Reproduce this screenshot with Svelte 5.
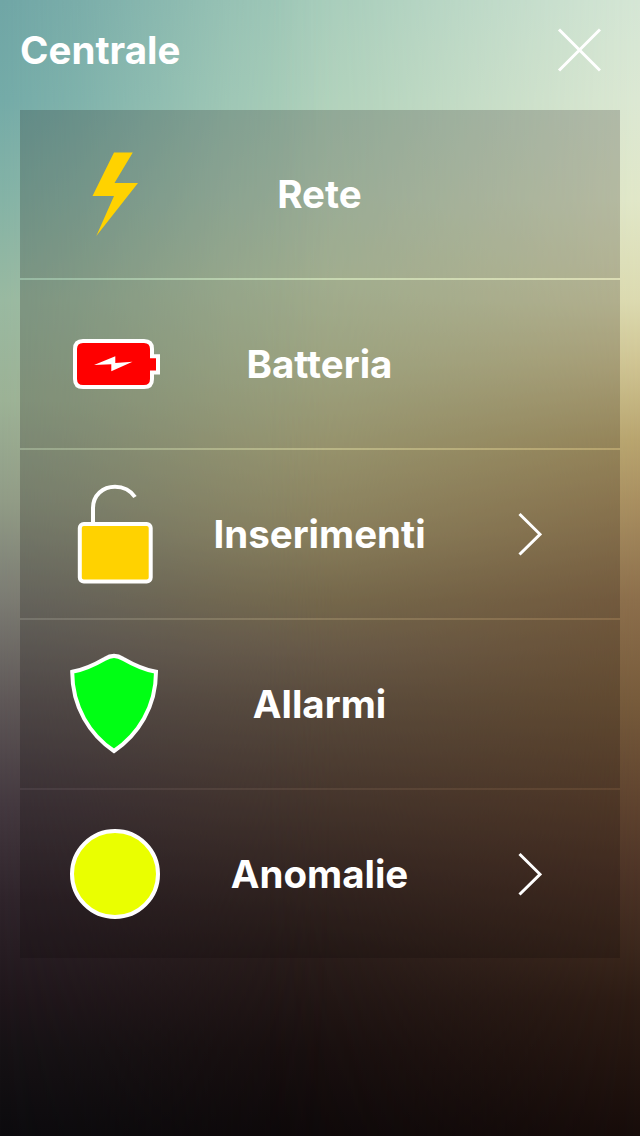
<script>
  const rows = [
    { icon: "bolt", label: "Rete", link: false },
    { icon: "battery", label: "Batteria", link: false },
    { icon: "lock", label: "Inserimenti", link: true },
    { icon: "shield", label: "Allarmi", link: false },
    { icon: "status", label: "Anomalie", link: true },
  ];
</script>

<main class="screen">
  <header>
    <h1>Centrale</h1>
    <button class="close" aria-label="Chiudi">
      <svg width="44" height="44" viewBox="0 0 44 44">
        <path d="M2 1.5 L43 42.5 M43 1.5 L2 42.5" />
      </svg>
    </button>
  </header>

  <ul class="menu">
    {#each rows as row}
      <li class="row">
        <span class="icon">
          <svg width="100" height="110" viewBox="0 0 100 110">
            {#if row.icon === "bolt"}
              <path d="M49 13.5 L67.8 13.5 L49.5 44 L73 44 L31.3 97 L49 57 L27.5 57 Z" fill="#ffd200" />
            {:else if row.icon === "battery"}
              <path
                class="outline"
                d="M18 32 H79 Q87 32 87 40 V47.3 H93 V63.5 H87 V70 Q87 78 79 78 H18 Q10 78 10 70 V40 Q10 32 18 32 Z"
                fill="#f00"
              />
              <path d="M29 56 L50.3 47.3 V54 L67.5 52.8 L46.3 62.3 V55.3 Z" fill="#fff" />
            {:else if row.icon === "lock"}
              <path class="outline" d="M28 44 V29 C28 16 38 7.7 50 7.7 C58.5 7.7 66 12 70 18" fill="none" />
              <rect class="outline" x="14.8" y="45" width="70.9" height="57.4" rx="4" fill="#ffd200" />
            {:else if row.icon === "shield"}
              <path
                class="outline"
                d="M7.2 22.8 C20 20.5 30 15.5 40 9.7 Q49 4 58 9.7 C68 15.5 78 20.5 91 22.8 C91 58 73 86 49 102 C25 86 7.2 58 7.2 22.8 Z"
                fill="#00ff14"
              />
            {:else}
              <circle class="outline" cx="50" cy="55" r="43" fill="#eaff00" />
            {/if}
          </svg>
        </span>
        <span class="label">{row.label}</span>
        {#if row.link}
          <span class="arrow">
            <svg width="24" height="44" viewBox="0 0 24 44">
              <path d="M1.5 2 L22 22.3 L1.5 42.5" />
            </svg>
          </span>
        {/if}
      </li>
    {/each}
  </ul>
</main>

<style>
  :global(body) {
    margin: 0;
    background: #0b0a0d;
  }

  .screen {
    position: relative;
    isolation: isolate;
    box-sizing: border-box;
    width: 640px;
    height: 1136px;
    padding: 0 20px;
    overflow: hidden;
    color: #fff;
    font-family: Inter, "Liberation Sans", sans-serif;
    background: linear-gradient(
      #70a6a6 0,
      #74aba8 100px,
      #85b3a6 200px,
      #99b9a1 300px,
      #9cb296 400px,
      #919c87 500px,
      #7b7b73 600px,
      #5f5858 700px,
      #453a41 800px,
      #2f242b 900px,
      #1f161b 1000px,
      #161215 1050px,
      #0c0b0e 1136px
    );
  }

  /* two more vertical ramps, faded in towards the middle and the right edge */
  .screen::before,
  .screen::after {
    content: "";
    position: absolute;
    inset: 0;
    z-index: -1;
  }

  .screen::before {
    background: linear-gradient(
      #a4cbb9 0,
      #add0ba 100px,
      #bad4b9 195px,
      #c5d7b1 279px,
      #c1cba0 365px,
      #bab889 449px,
      #a99f74 535px,
      #91835f 600px,
      #80705a 650px,
      #6c5c4b 705px,
      #564439 789px,
      #3e2e29 875px,
      #271b19 960px,
      #180f0f 1050px,
      #0e090a 1136px
    );
    mask-image: linear-gradient(to right, transparent, rgba(0, 0, 0, 0.2) 12%, rgba(0, 0, 0, 0.75) 36%, #000 52%);
  }

  .screen::after {
    background: linear-gradient(
      #d5e6d5 0,
      #dce8d3 100px,
      #e1e7c8 200px,
      #dcdab0 300px,
      #d0c594 360px,
      #b8a46e 440px,
      #a98f60 500px,
      #8c6e4b 600px,
      #775b3b 700px,
      #60442f 800px,
      #4f3527 870px,
      #3b271c 950px,
      #2d1c14 1000px,
      #170c0a 1136px
    );
    mask-image: linear-gradient(to right, transparent 42%, rgba(0, 0, 0, 0.15) 55%, #000);
  }

  header {
    display: flex;
    align-items: center;
    justify-content: space-between;
    height: 110px;
    padding: 0 19px 10px 0;
    box-sizing: border-box;
  }

  h1,
  .label {
    margin: 0;
    font-size: 38.5px;
    font-weight: 700;
    line-height: 46px;
    white-space: nowrap;
  }

  .close {
    display: flex;
    padding: 0;
    border: 0;
    background: none;
  }

  .close path,
  .arrow path {
    fill: none;
    stroke: #fff;
    stroke-width: 3;
  }

  .menu {
    display: grid;
    gap: 2px;
    margin: 0;
    padding: 0;
    list-style: none;
  }

  .row {
    display: grid;
    grid-template-columns: 190px 1fr 191px;
    align-items: center;
    height: 168px;
    background: rgba(10, 6, 5, 0.2);
  }

  .icon,
  .arrow {
    display: flex;
    justify-content: center;
  }

  .arrow {
    padding: 0 0 1px 11px;
  }

  .outline {
    stroke: #fff;
    stroke-width: 4;
  }

  .label {
    justify-self: center;
  }
</style>
